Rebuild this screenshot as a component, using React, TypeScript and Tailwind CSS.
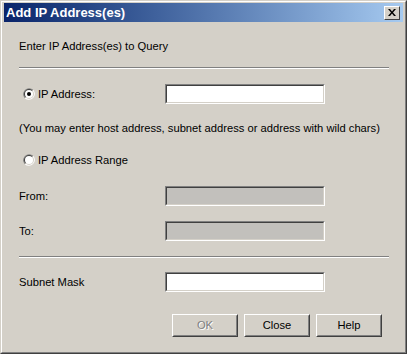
import React from "react";

const font = { fontFamily: '"Liberation Sans", Arial, sans-serif' };

function Radio({ checked }: { checked?: boolean }) {
  return (
    <svg width="12" height="12" viewBox="0 0 12 12" className="shrink-0">
      <path d="M 10.24 1.76 A 6 6 0 0 0 1.76 10.24" fill="#808080" />
      <path d="M 1.76 10.24 A 6 6 0 0 0 10.24 1.76" fill="#ffffff" />
      <circle cx="6" cy="6" r="5" fill="#d4d0c8" />
      <path d="M 9.54 2.46 A 5 5 0 0 0 2.46 9.54" fill="#404040" />
      <circle cx="6" cy="6" r="4" fill="#ffffff" />
      {checked && <circle cx="6" cy="6" r="2" fill="#000000" />}
    </svg>
  );
}

function Edit({ disabled }: { disabled?: boolean }) {
  return (
    <div className="w-[160px] h-[20px] border border-t-[#808080] border-l-[#808080] border-b-white border-r-white">
      <div
        className={
          "w-full h-full border border-t-[#404040] border-l-[#404040] border-b-[#d4d0c8] border-r-[#d4d0c8] " +
          (disabled ? "bg-[#c2c0bc]" : "bg-white")
        }
      />
    </div>
  );
}

function Button({ label, disabled }: { label: string; disabled?: boolean }) {
  return (
    <div className="w-[66px] h-[23px] border border-t-white border-l-white border-b-[#404040] border-r-[#404040]">
      <div className="w-full h-full border border-t-[#d4d0c8] border-l-[#d4d0c8] border-b-[#808080] border-r-[#808080] flex items-center justify-center text-[11.2px]">
        {disabled ? (
          <span className="text-[#808080] [text-shadow:1px_1px_0_#ffffff]">{label}</span>
        ) : (
          <span className="text-black">{label}</span>
        )}
      </div>
    </div>
  );
}

function Separator() {
  return <div className="w-[370px] h-[2px] border-t border-t-[#808080] border-b border-b-white" />;
}

export default function App() {
  return (
    <div
      style={font}
      className="w-[407px] h-[354px] bg-[#d4d0c8] border border-t-[#d4d0c8] border-l-[#d4d0c8] border-b-[#404040] border-r-[#404040]"
    >
      <div className="w-full h-full border border-t-white border-l-white border-b-[#808080] border-r-[#808080] pt-[1px] px-[2px] flex flex-col">
        {/* title bar */}
        <div className="h-[19px] bg-gradient-to-r from-[#0a246a] to-[#a6caf0] flex items-center justify-between pl-[2px] pr-[3px]">
          <span className="text-white font-bold text-[13px] leading-none">Add IP Address(es)</span>
          <div className="w-[16px] h-[14px] bg-[#d4d0c8] border border-t-white border-l-white border-b-[#404040] border-r-[#404040] flex items-center justify-center">
            <svg width="8" height="7" viewBox="0 0 8 7">
              <path d="M0 0h2l2 2.5L6 0h2L5 3.5 8 7H6L4 4.5 2 7H0l3-3.5z" fill="#000" />
            </svg>
          </div>
        </div>

        {/* body */}
        <div className="flex flex-col pl-[15px] text-[11.2px] text-black">
          <div className="mt-[17px] h-[14px] flex items-center">Enter IP Address(es) to Query</div>
          <div className="mt-[14px]">
            <Separator />
          </div>
          <div className="mt-[15px] h-[20px] flex items-center">
            <div className="w-[146px] flex items-center gap-[3px] pl-[4px]">
              <Radio checked />
              <span>IP Address:</span>
            </div>
            <Edit />
          </div>
          <div className="mt-[17px] h-[14px] flex items-center">
            (You may enter host address, subnet address or address with wild chars)
          </div>
          <div className="mt-[18px] h-[14px] flex items-center gap-[3px] pl-[4px]">
            <Radio />
            <span>IP Address Range</span>
          </div>
          <div className="mt-[19px] h-[20px] flex items-center">
            <div className="w-[146px]">From:</div>
            <Edit disabled />
          </div>
          <div className="mt-[15px] h-[20px] flex items-center">
            <div className="w-[146px]">To:</div>
            <Edit disabled />
          </div>
          <div className="mt-[15px]">
            <Separator />
          </div>
          <div className="mt-[14px] h-[20px] flex items-center">
            <div className="w-[146px]">Subnet Mask</div>
            <Edit />
          </div>
          <div className="mt-[22px] flex gap-[6px] pl-[153px]">
            <Button label="OK" disabled />
            <Button label="Close" />
            <Button label="Help" />
          </div>
        </div>
      </div>
    </div>
  );
}
